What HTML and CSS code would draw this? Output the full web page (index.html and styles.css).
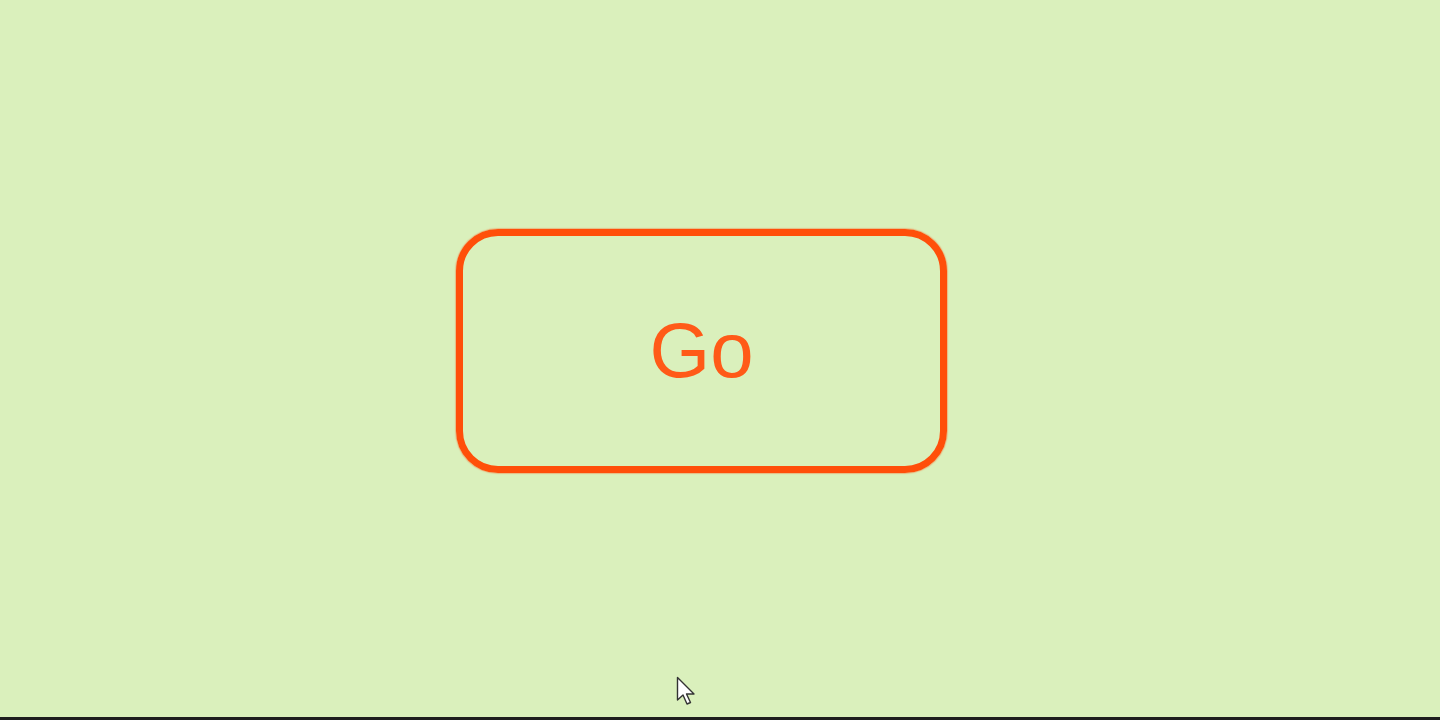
FILE: index.html
```html
<!DOCTYPE html>
<html>
<head>
<meta charset="utf-8">
<link rel="stylesheet" href="styles.css">
</head>
<body>
<main class="stage">
  <button class="go">Go</button>
</main>
<footer class="bar"></footer>
<svg class="cursor" width="22" height="32" viewBox="0 0 22 32">
  <path d="M1.5 1.5 L1.5 24 L7 19 L11 28 L14.5 26.5 L10.5 18 L18 18 Z" fill="#fff" stroke="#333" stroke-width="1.4" stroke-linejoin="round"/>
</svg>
</body>
</html>
```
FILE: styles.css
```css
html, body {
  margin: 0;
  padding: 0;
  height: 100%;
}
body {
  background: #daf0bc;
  font-family: "Liberation Sans", Arial, sans-serif;
  display: flex;
  flex-direction: column;
  overflow: hidden;
  position: relative;
}
.stage {
  flex: 1;
  padding: 229px 0 0 456px;
}
.go {
  width: 491px;
  height: 244px;
  box-sizing: border-box;
  border: 7px solid #ff4f0a;
  border-radius: 42px;
  background: transparent;
  color: #ff5a18;
  font-family: "Liberation Sans", Arial, sans-serif;
  font-size: 78px;
  line-height: 1;
  padding: 0 0 3px 0;
  cursor: pointer;
  box-shadow: 0 0 1px 1px rgba(255, 90, 30, 0.35);
}
.bar {
  height: 3px;
  background: #1e1e1e;
}
.cursor {
  position: absolute;
  left: 676px;
  top: 676px;
}
```
